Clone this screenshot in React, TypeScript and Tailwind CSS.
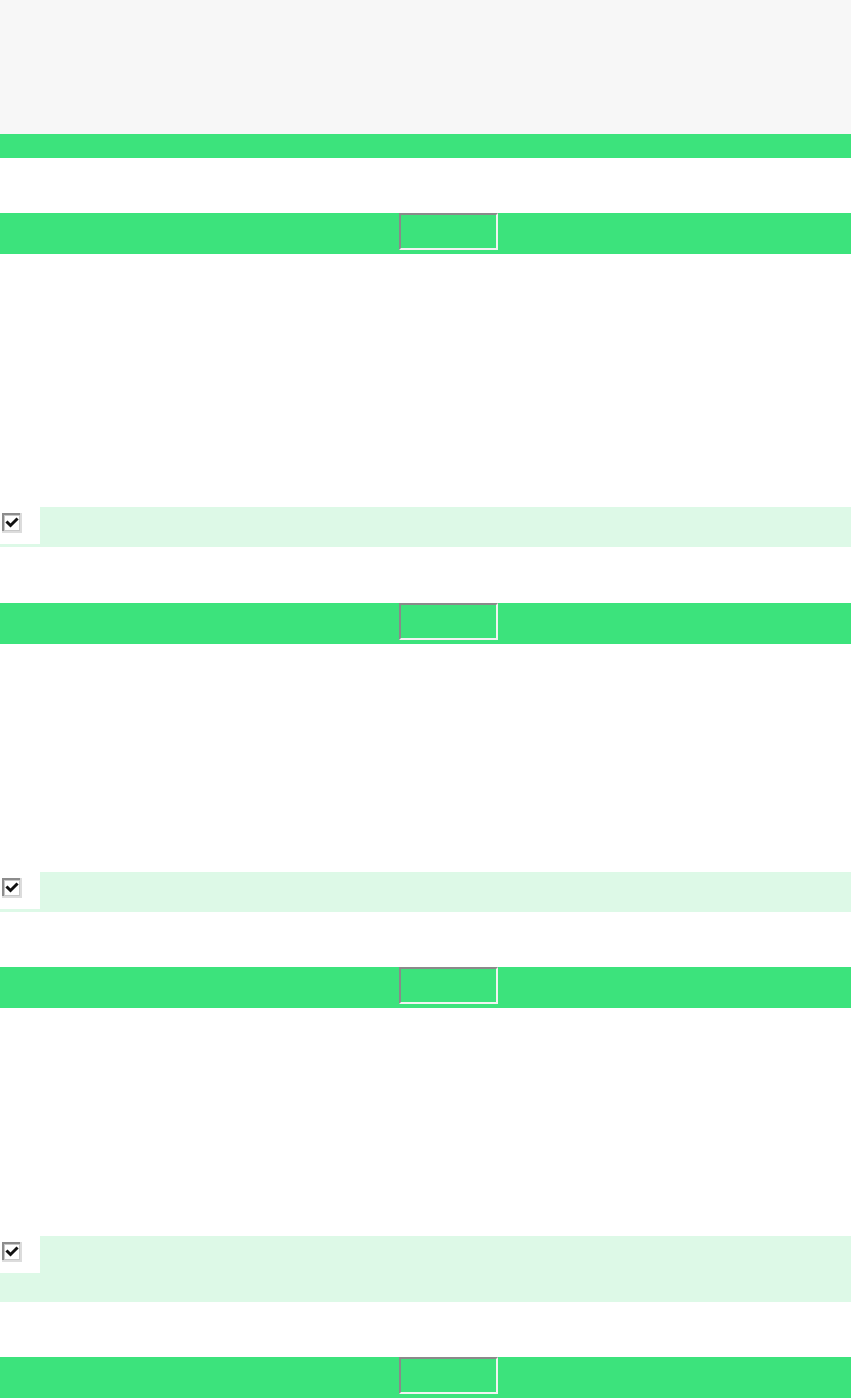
import React from "react";

function Bar() {
  return (
    <div className="h-[41px] bg-[#3ce37c] pl-[399px]">
      <div className="h-[37px] w-[99px] border-2 border-t-[#8a8a8a] border-l-[#8a8a8a] border-b-[#f2f2f2] border-r-[#f2f2f2] bg-[#3ce37c]" />
    </div>
  );
}

function Check() {
  return (
    <svg width="20" height="20" viewBox="0 0 20 20" className="block">
      <rect x="0" y="0" width="20" height="20" fill="#dcdcdc" />
      <rect x="0" y="0" width="18" height="18" fill="#8c8c8c" />
      <rect x="2" y="2" width="16" height="16" fill="#c8c8c8" />
      <rect x="3" y="3" width="14" height="14" fill="#ffffff" />
      <path d="M5.5 9.5 L8.5 12.5 L14.5 6.5" stroke="#111" strokeWidth="3" fill="none" strokeLinecap="square" />
    </svg>
  );
}

function Row({ h }: { h: number }) {
  return (
    <div className={`bg-[#ddf9e7] ${h === 66 ? "h-[66px]" : "h-[40px]"}`}>
      <div className="flex h-[37px] w-[40px] items-start bg-white pl-[2px] pt-[6px]">
        <Check />
      </div>
    </div>
  );
}

export default function App() {
  return (
    <div className="w-[851px] bg-white">
      <div className="h-[134px] bg-[#f7f7f7]" />
      <div className="h-[24px] bg-[#3ce37c]" />
      <div className="h-[55px]" />
      <Bar />
      <div className="h-[253px]" />
      <Row h={40} />
      <div className="h-[56px]" />
      <Bar />
      <div className="h-[228px]" />
      <Row h={40} />
      <div className="h-[55px]" />
      <Bar />
      <div className="h-[228px]" />
      <Row h={66} />
      <div className="h-[55px]" />
      <Bar />
    </div>
  );
}
